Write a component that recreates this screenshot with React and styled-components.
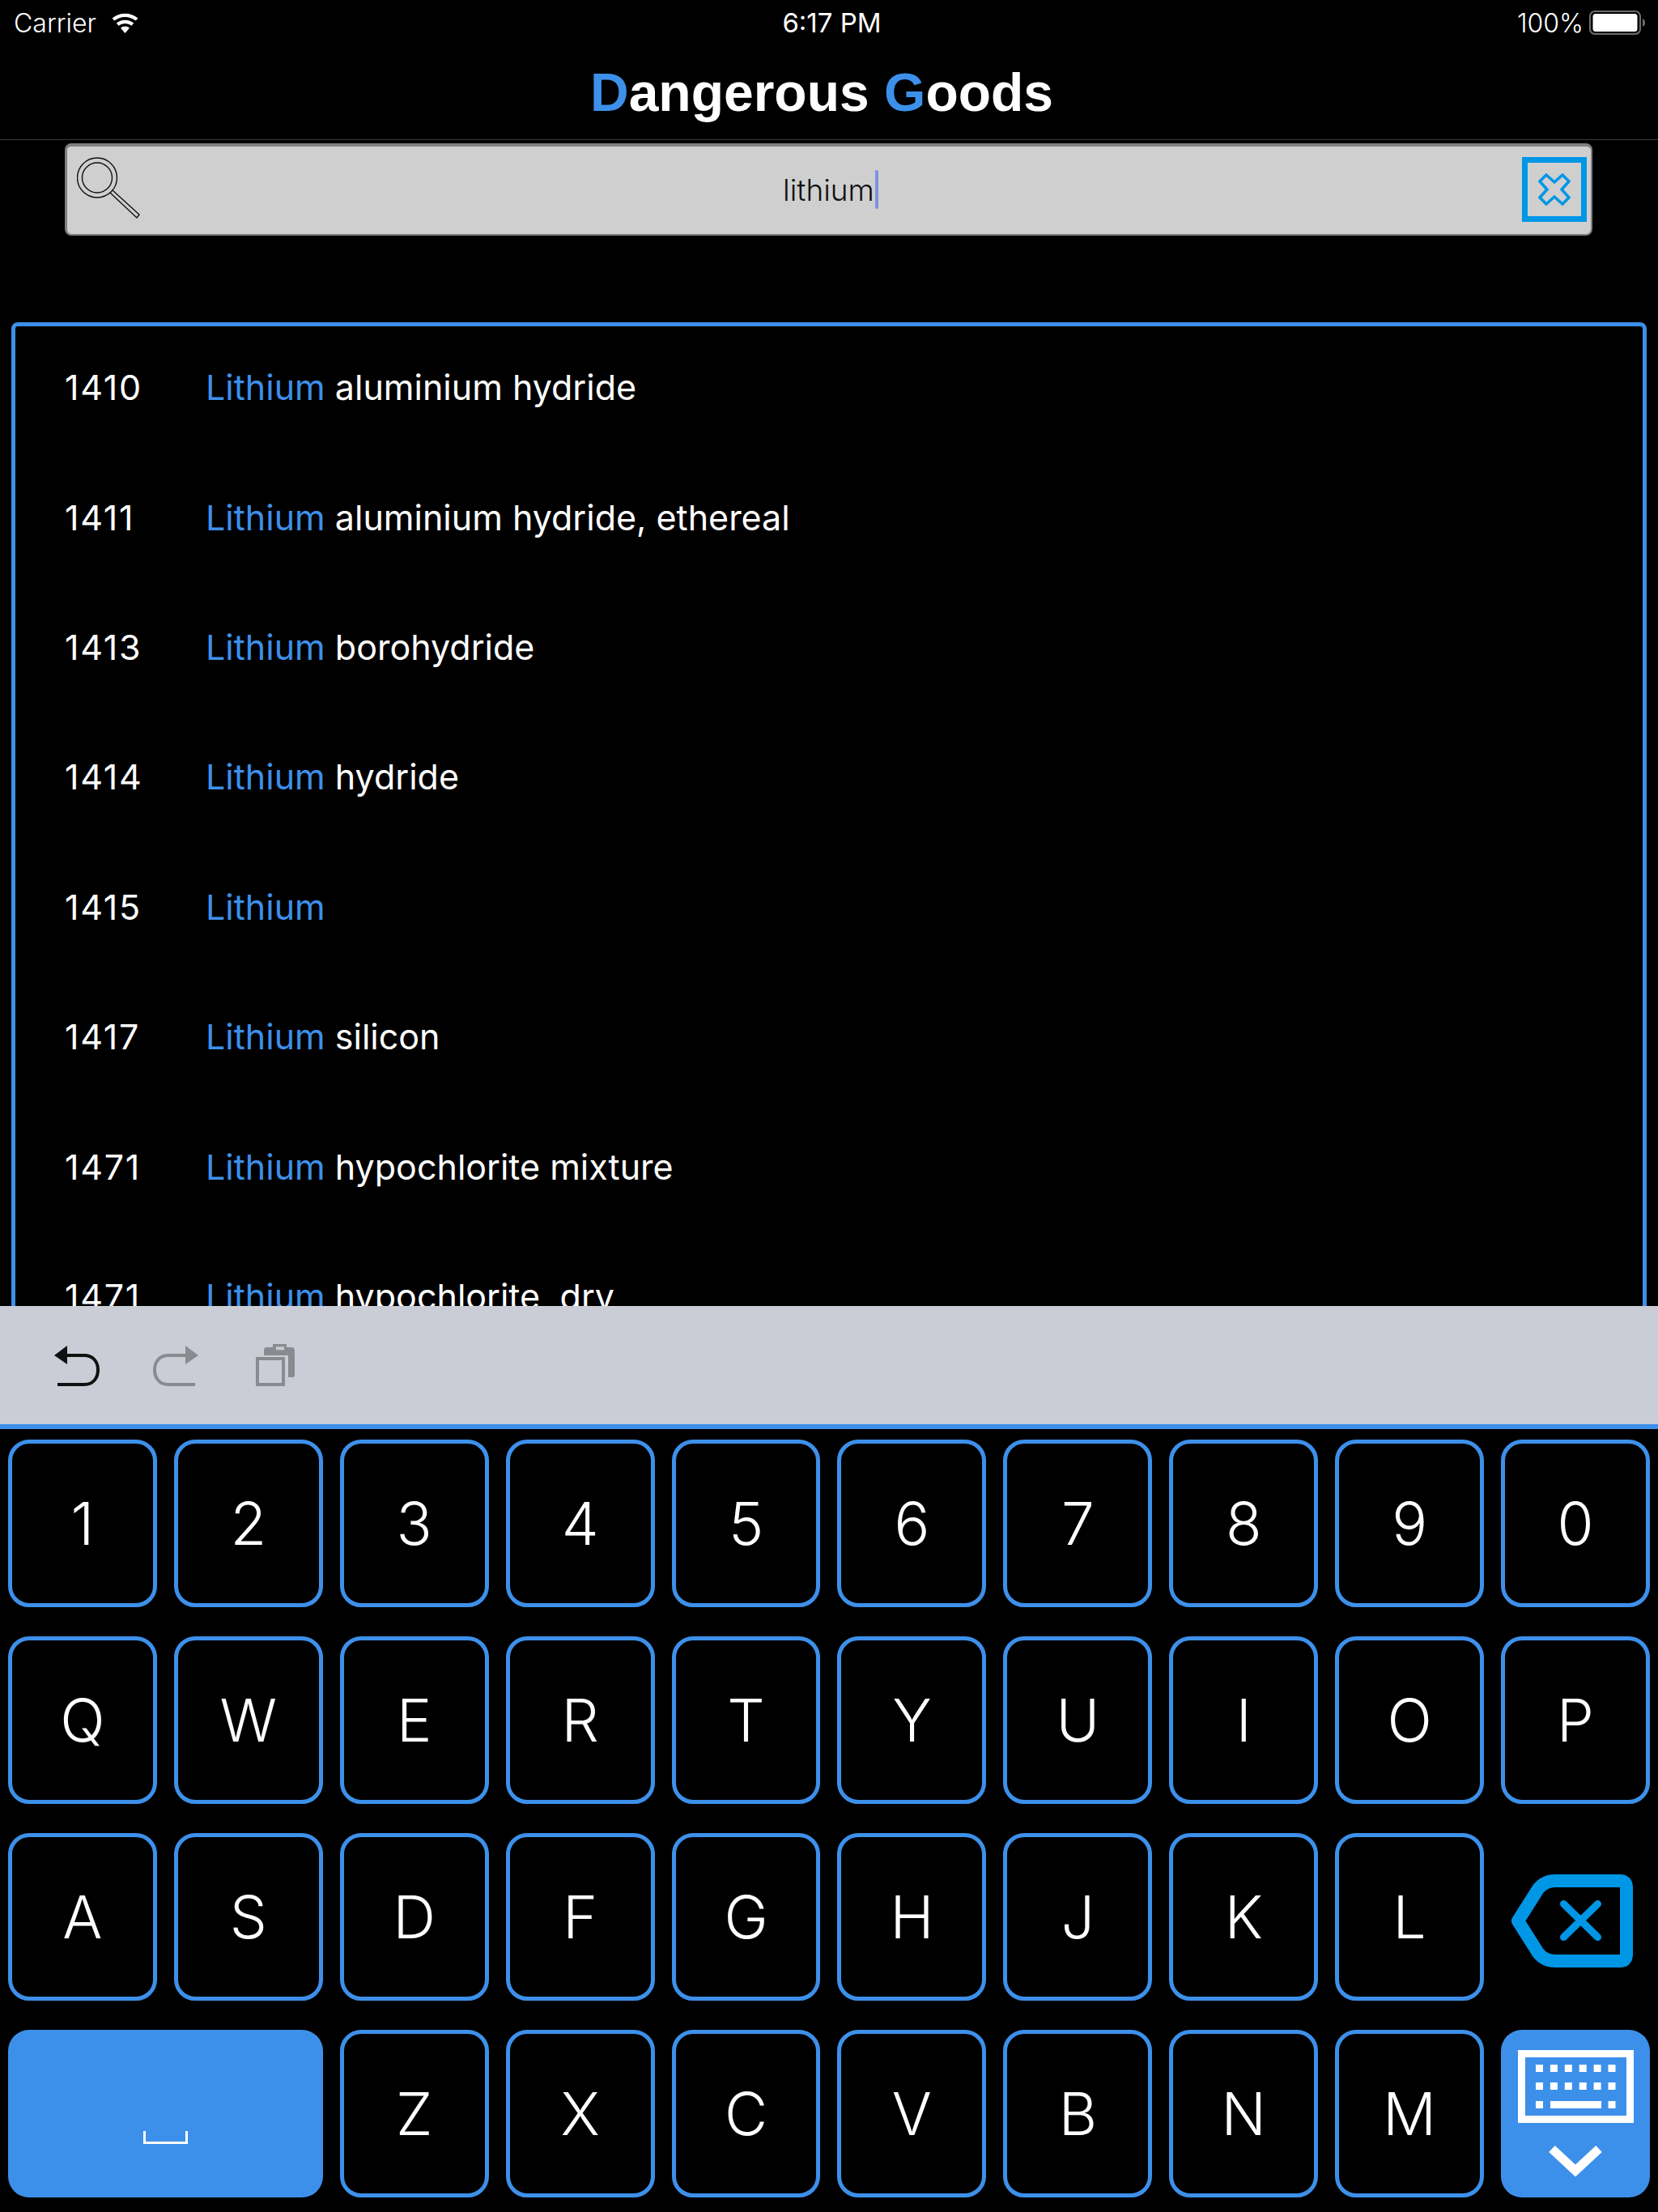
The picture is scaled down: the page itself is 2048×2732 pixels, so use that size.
import React from 'react'
import styled, { createGlobalStyle } from 'styled-components'

const BLUE = '#3d90ea'
const CYAN = '#0096e6'
const FONT = 'Inter, "Liberation Sans", sans-serif'

const GlobalStyle = createGlobalStyle`
  html, body {
    margin: 0;
    padding: 0;
    background: #000;
  }
  * {
    box-sizing: border-box;
  }
`

const Screen = styled.div`
  width: 2048px;
  height: 2732px;
  display: flex;
  flex-direction: column;
  overflow: hidden;
  background: #000;
  color: #fff;
  font-family: ${FONT};
`

const StatusBar = styled.div`
  height: 56px;
  padding: 0 15px 0 17px;
  display: grid;
  grid-template-columns: 1fr auto 1fr;
  align-items: center;
  font-size: 32px;
`

const StatusLeft = styled.div`
  display: flex;
  align-items: center;
  gap: 17px;
  font-weight: 300;
`

const StatusRight = styled.div`
  display: flex;
  justify-content: flex-end;
  align-items: center;
  gap: 7px;
  font-weight: 300;
`

const Clock = styled.div`
  margin-left: 5px;
  font-size: 33px;
  font-weight: 400;
`

const NavBar = styled.div`
  height: 117px;
  padding-right: 18px;
  display: flex;
  align-items: center;
  justify-content: center;
  border-bottom: 1px solid #3a3a3a;
  font-family: "Liberation Sans", Arial, sans-serif;
  font-size: 66px;
  font-weight: 700;
`

const Accent = styled.span`
  color: ${BLUE};
`

const SearchRow = styled.div`
  padding: 4px 81px 0 80px;
  flex: none;
`

const SearchBar = styled.div`
  height: 114px;
  padding: 0 5px 3px 12px;
  display: flex;
  align-items: center;
  justify-content: space-between;
  position: relative;
  background: #cfcfcf;
  border: 2px solid #808080;
  border-top-width: 4px;
  border-left-width: 3px;
  border-radius: 8px;
  color: #111;
`

const SearchText = styled.div`
  position: absolute;
  left: 4px;
  right: 0;
  top: 29px;
  text-align: center;
  font-size: 37px;
  font-weight: 300;
`

const Caret = styled.span`
  display: inline-block;
  width: 4px;
  height: 48px;
  margin-left: 1px;
  vertical-align: -10px;
  border-radius: 2px;
  background: #7d93e0;
`

const ClearButton = styled.div`
  width: 80px;
  height: 80px;
  display: flex;
  align-items: center;
  justify-content: center;
  border: 7px solid ${CYAN};
`

const ListClip = styled.div`
  flex: 1;
  min-height: 0;
  margin-top: 107px;
  padding: 0 14px;
  overflow: hidden;
`

const ListPanel = styled.div`
  border: 5px solid ${BLUE};
  border-radius: 8px;
  padding-bottom: 40px;
`

const Row = styled.div`
  height: 160.4px;
  padding: 0 0 10px 61px;
  display: flex;
  align-items: center;
  font-size: 43px;
`

const Code = styled.div`
  width: 174px;
  flex: none;
  letter-spacing: 1.7px;
`

const Toolbar = styled.div`
  height: 152px;
  flex: none;
  padding: 0 0 47px 67px;
  display: flex;
  align-items: flex-end;
  gap: 66px;
  background: #cacdd6;
  border-bottom: 6px solid ${BLUE};
`

const Keyboard = styled.div`
  flex: none;
  padding: 13px 10px 18px;
  display: grid;
  grid-template-columns: repeat(10, 1fr);
  grid-auto-rows: 207px;
  column-gap: 21px;
  row-gap: 36px;
`

const Key = styled.div`
  display: flex;
  align-items: center;
  justify-content: center;
  border: 5px solid ${BLUE};
  border-radius: 26px;
  font-size: 73px;
  font-weight: 300;
`

const SpaceKey = styled.div`
  grid-column: span 2;
  display: flex;
  justify-content: center;
  padding-top: 125px;
  background: ${BLUE};
  border-radius: 26px;
`

const SpaceMark = styled.div`
  width: 55px;
  height: 16px;
  border: 3px solid #fff;
  border-top: none;
`

const IconKey = styled.div`
  display: flex;
  align-items: center;
  justify-content: center;
  padding: 10px 9px 0 0;
`

const HideKey = styled.div`
  display: flex;
  flex-direction: column;
  align-items: center;
  padding-top: 25px;
  gap: 27px;
  background: ${BLUE};
  border-radius: 26px;
`

const rows = [
  ['1410', 'aluminium hydride'],
  ['1411', 'aluminium hydride, ethereal'],
  ['1413', 'borohydride'],
  ['1414', 'hydride'],
  ['1415', ''],
  ['1417', 'silicon'],
  ['1471', 'hypochlorite mixture'],
  ['1471', 'hypochlorite, dry'],
]

const WifiIcon = () => (
  <svg width="37" height="28" viewBox="0 0 37 28" fill="#fff">
    <path d="M18.5 27 L13 20.5 A8.5 8.5 0 0 1 24 20.5 Z" />
    <path d="M10.5 17.8 L7.8 14.6 A16.5 16.5 0 0 1 29.2 14.6 L26.5 17.8 A12.5 12.5 0 0 0 10.5 17.8 Z" />
    <path d="M5.3 11.6 L2.6 8.4 A25 25 0 0 1 34.4 8.4 L31.7 11.6 A21 21 0 0 0 5.3 11.6 Z" />
  </svg>
)

const BatteryIcon = () => (
  <svg width="70" height="32" viewBox="0 0 70 32">
    <rect x="1" y="2" width="62" height="28" rx="6" fill="none" stroke="#6d6d6d" strokeWidth="2" />
    <rect x="4.5" y="5" width="55" height="22" rx="3.5" fill="#fff" />
    <path d="M66 11 C68.5 12 69 14 69 16 C69 18 68.5 20 66 21 Z" fill="#6d6d6d" />
  </svg>
)

const MagnifierIcon = () => (
  <svg width="80" height="80" viewBox="0 0 80 80" fill="none" stroke="#111" strokeWidth="1.4">
    <circle cx="25" cy="25.5" r="24.5" />
    <circle cx="25" cy="25.5" r="18.5" />
    <path d="M41 44 L74 75 L77 71 L44 41" />
  </svg>
)

const ClearIcon = () => (
  <svg width="40" height="40" viewBox="0 0 40 40" fill="none" stroke={CYAN} strokeWidth="3.5">
    <path d="M20 11 L30 2 L38 10 L29 20 L38 30 L30 38 L20 29 L10 38 L2 30 L11 20 L2 10 L10 2 Z" />
  </svg>
)

const UndoIcon = ({ color, flip }) => (
  <svg
    width="56"
    height="50"
    viewBox="0 0 56 50"
    fill="none"
    stroke={color}
    strokeWidth="4"
    style={flip ? { transform: 'scaleX(-1)' } : undefined}
  >
    <path d="M14 12 H37 C48 12 54 20 54 30 C54 40 48 48 37 48 H4" />
    <path d="M0 12 L16 0 V23 Z" fill={color} stroke="none" />
  </svg>
)

const PasteIcon = () => (
  <svg width="53" height="52" viewBox="-5 0 53 52" fill="#8a8b90">
    <path d="M10 14 V7 Q10 4 14 4 H21 V0 H38 V4 H44 Q48 4 48 8 V39 Q48 41 45 41 H40 V14 Z" />
    <rect x="25" y="3.3" width="10" height="4" fill="#cacdd6" />
    <rect x="2" y="18" width="32" height="32" fill="none" stroke="#8a8b90" strokeWidth="4" />
  </svg>
)

const BackspaceIcon = () => (
  <svg width="150" height="115" viewBox="0 0 150 115">
    <path
      d="M54 8 H134 Q142 8 142 16 V99 Q142 107 134 107 H54 Q41 107 33 97 L8 57.5 L33 18 Q41 8 54 8 Z"
      fill="none"
      stroke={CYAN}
      strokeWidth="16"
      strokeLinejoin="round"
    />
    <path d="M64.5 36.5 L106.5 77.5 M106.5 36.5 L64.5 77.5" stroke={CYAN} strokeWidth="9" strokeLinecap="round" />
  </svg>
)

const KeyboardIcon = () => (
  <svg width="143" height="90" viewBox="0 0 143 90" fill="#fff">
    <path fillRule="evenodd" d="M0 0 H143 V90 H0 Z M9 9 V81 H134 V9 Z" />
    {[0, 1, 2, 3, 4, 5].map((i) => (
      <rect key={`a${i}`} x={22 + i * 17.9} y="18" width="9" height="9" />
    ))}
    {[0, 1, 2, 3, 4, 5].map((i) => (
      <rect key={`b${i}`} x={22 + i * 17.9} y="40" width="9" height="9" />
    ))}
    <rect x="22" y="63" width="9" height="9" />
    <rect x="40" y="63" width="63" height="9" />
    <rect x="111.5" y="63" width="9" height="9" />
  </svg>
)

const ChevronIcon = () => (
  <svg width="66" height="40" viewBox="0 0 66 40" fill="none" stroke="#fff" strokeWidth="11">
    <path d="M4 5 L33 32 L62 5" />
  </svg>
)

const App = () => (
  <Screen>
    <GlobalStyle />
    <StatusBar>
      <StatusLeft>
        Carrier
        <WifiIcon />
      </StatusLeft>
      <Clock>6:17 PM</Clock>
      <StatusRight>
        100%
        <BatteryIcon />
      </StatusRight>
    </StatusBar>
    <NavBar>
      <span>
        <Accent>D</Accent>angerous <Accent>G</Accent>oods
      </span>
    </NavBar>
    <SearchRow>
      <SearchBar>
        <MagnifierIcon />
        <SearchText>
          lithium
          <Caret />
        </SearchText>
        <ClearButton>
          <ClearIcon />
        </ClearButton>
      </SearchBar>
    </SearchRow>
    <ListClip>
      <ListPanel>
        {rows.map(([code, name], i) => (
          <Row key={i}>
            <Code>{code}</Code>
            <span>
              <Accent>Lithium</Accent>
              {name && ` ${name}`}
            </span>
          </Row>
        ))}
      </ListPanel>
    </ListClip>
    <Toolbar>
      <UndoIcon color="#111" />
      <UndoIcon color="#8a8b90" flip />
      <PasteIcon />
    </Toolbar>
    <Keyboard>
      {'1234567890QWERTYUIOPASDFGHJKL'.split('').map((k) => (
        <Key key={k}>{k}</Key>
      ))}
      <IconKey>
        <BackspaceIcon />
      </IconKey>
      <SpaceKey>
        <SpaceMark />
      </SpaceKey>
      {'ZXCVBNM'.split('').map((k) => (
        <Key key={k}>{k}</Key>
      ))}
      <HideKey>
        <KeyboardIcon />
        <ChevronIcon />
      </HideKey>
    </Keyboard>
  </Screen>
)

export default App
